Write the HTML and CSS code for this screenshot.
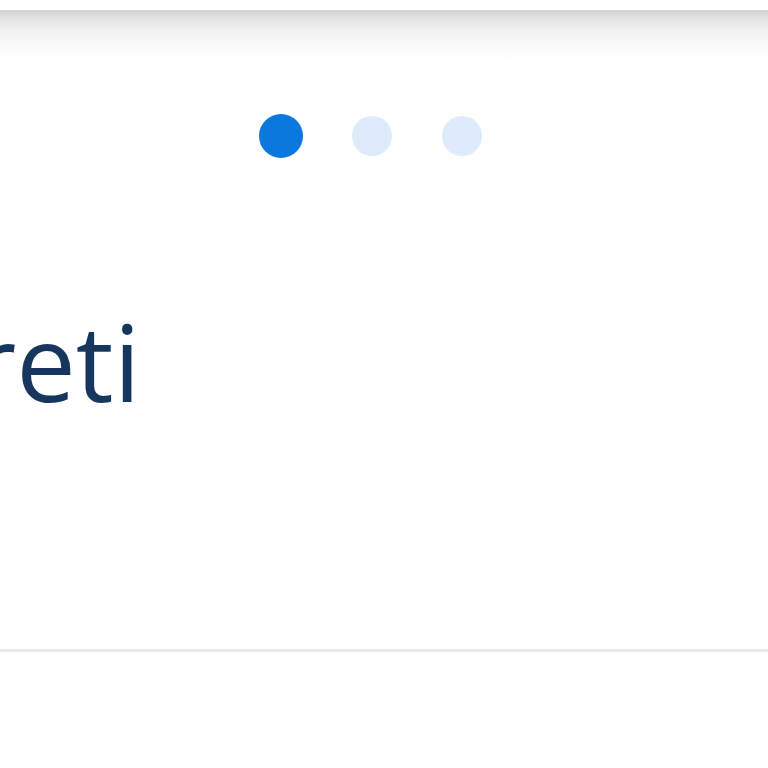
FILE: index.html
```html
<!DOCTYPE html>
<html lang="en">
<head>
    <meta charset="UTF-8">
    <meta name="viewport" content="width=device-width, initial-scale=1.0">
    <title>Slide</title>
    <link rel="stylesheet" href="styles.css">
</head>
<body>

<div class="topbar"></div>

<div class="card">
    <div class="dots">
        <span class="slot"><span class="dot active"></span></span>
        <span class="slot"><span class="dot"></span></span>
        <span class="slot"><span class="dot"></span></span>
    </div>
    <h1 class="title">reti</h1>
</div>

</body>
</html>
```

FILE: styles.css
```css
* { box-sizing: border-box; }
body { font-family: "Open Sans", "Noto Sans", sans-serif; margin: 0; padding: 0; background: #fff; overflow: hidden; }
.topbar {
    height: 10px;
    background: #fff;
}
.card {
    height: 642px;
    background: linear-gradient(to bottom, #d2d2d2 0px, #e2e2e2 8px, #f2f2f2 22px, #fcfcfc 40px, #fff 52px);
    border-bottom: 3px solid #e8e8ee;
    padding-top: 104px;
}
.dots {
    display: flex;
    margin-left: 236px;
    height: 44px;
    align-items: center;
}
.slot {
    width: 90.5px;
    display: flex;
    justify-content: center;
    align-items: center;
}
.dot {
    width: 40px;
    height: 40px;
    border-radius: 50%;
    background-color: #ddebfa;
}
.dot.active {
    width: 44px;
    height: 44px;
    background-color: #0a78dc;
}
.title {
    margin: 150px 0 0 -27px;
    font-size: 106px;
    font-weight: 500;
    line-height: 1;
    color: #17365d;
    letter-spacing: 0;
}
```
